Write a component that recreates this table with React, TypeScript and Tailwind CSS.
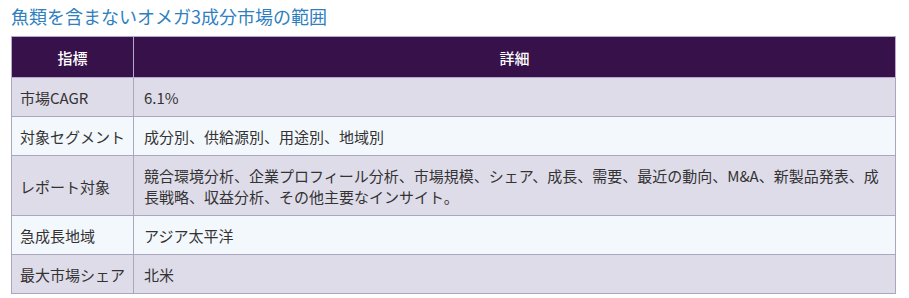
const rows: { label: string; value: string }[] = [
  { label: "市場CAGR", value: "6.1%" },
  { label: "対象セグメント", value: "成分別、供給源別、用途別、地域別" },
  {
    label: "レポート対象",
    value:
      "競合環境分析、企業プロフィール分析、市場規模、シェア、成長、需要、最近の動向、M&A、新製品発表、成長戦略、収益分析、その他主要なインサイト。",
  },
  { label: "急成長地域", value: "アジア太平洋" },
  { label: "最大市場シェア", value: "北米" },
];

export default function App() {
  return (
    <div className="bg-white pl-[11px] pr-[13px] pt-[3px] font-['Noto_Sans_CJK_JP',sans-serif]">
      <h2 className="text-[18px] leading-[27px] font-normal text-[#2f7fbf] mb-[6px]">
        魚類を含まないオメガ3成分市場の範囲
      </h2>
      <table className="w-[885px] border-collapse text-[15px] text-[#333]">
        <thead>
          <tr className="bg-[#36114a] text-white">
            <th className="w-[122px] border border-[#b7a9cb] pt-[10px] pb-[9px] leading-[21px] font-medium text-center">
              指標
            </th>
            <th className="border border-[#b7a9cb] pt-[10px] pb-[9px] leading-[21px] font-medium text-center">
              詳細
            </th>
          </tr>
        </thead>
        <tbody>
          {rows.map((r, i) => (
            <tr key={r.label} className={i % 2 === 0 ? "bg-[#dfdcea]" : "bg-[#f3f8fd]"}>
              <td className="border border-[#a9a6bf] px-[8px] pt-[9px] pb-[8px] leading-[21px] align-middle">
                {r.label}
              </td>
              <td className="border border-[#a9a6bf] px-[10px] pt-[9px] pb-[8px] leading-[21px] align-middle">
                {r.value}
              </td>
            </tr>
          ))}
        </tbody>
      </table>
    </div>
  );
}
